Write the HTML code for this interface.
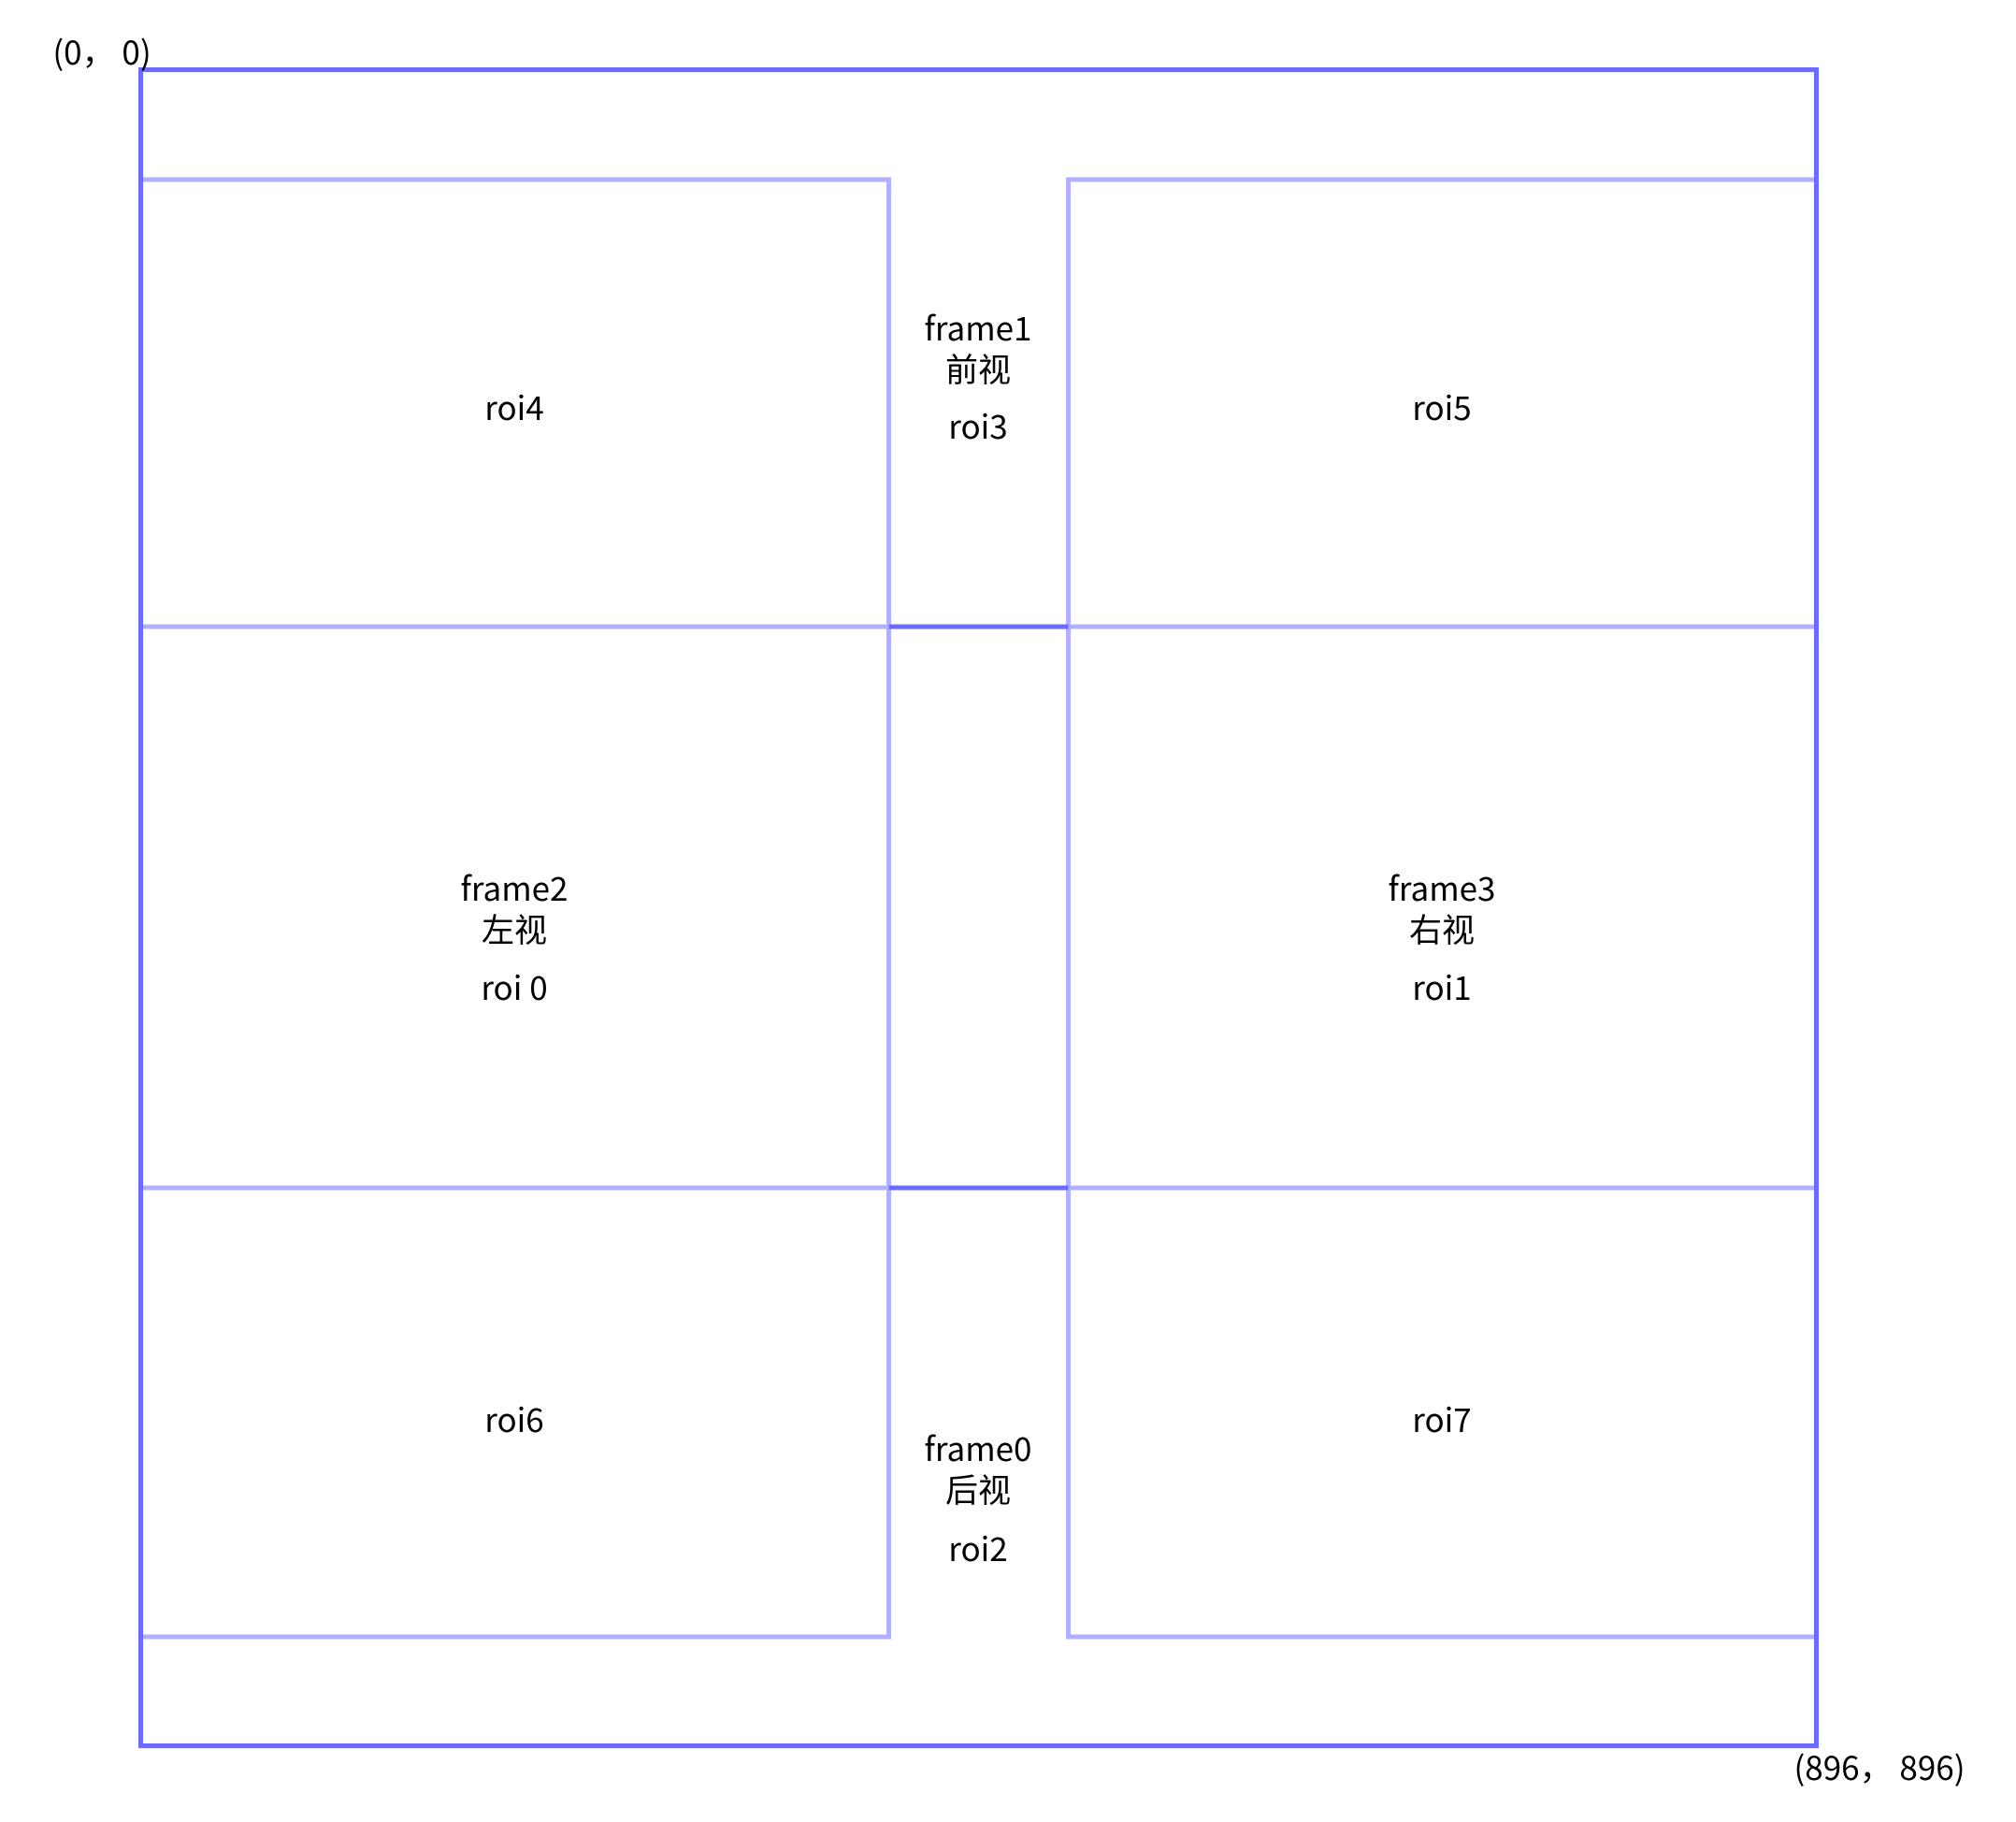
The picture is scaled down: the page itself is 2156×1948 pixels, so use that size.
<!DOCTYPE html>
<html><head><meta charset="utf-8">
<style>
html,body{margin:0;padding:0;background:#fff;}
body{width:2156px;height:1948px;position:relative;overflow:hidden;font-family:"Noto Sans CJK SC","Liberation Sans",sans-serif;color:#000;}
.t{position:absolute;transform:translate(-50%,-50%);font-size:35px;line-height:44px;white-space:nowrap;text-align:center;}
svg{position:absolute;left:0;top:0;}
</style></head><body>
<svg width="2156" height="1948" viewBox="0 0 2156 1948">
<g fill="none" stroke="#b0b0ff" stroke-width="5">
<path d="M150 192H950.5V1750H150"/>
<path d="M1942 192H1142.5V1750H1942"/>
<path d="M150 670H950.5M150 1270H950.5M1142.5 670H1942M1142.5 1270H1942"/>
</g>
<g fill="none" stroke="#6b6bff">
<path d="M950.5 670H1142.5M950.5 1270H1142.5" stroke-width="5"/>
<rect x="150.5" y="74.5" width="1792" height="1792" stroke-width="5"/>
</g>
</svg>
<div class="t" style="left:109px;top:55px;">(0，&nbsp;0)</div>
<div class="t" style="left:2010px;top:1889px;">(896，&nbsp;896)</div>
<div class="t" style="left:550px;top:435px;">roi4</div>
<div class="t" style="left:1542px;top:435px;">roi5</div>
<div class="t" style="left:1046px;top:350px;">frame1</div>
<div class="t" style="left:1046px;top:394px;">前视</div>
<div class="t" style="left:1046px;top:455px;">roi3</div>
<div class="t" style="left:550px;top:949px;">frame2</div>
<div class="t" style="left:550px;top:993px;">左视</div>
<div class="t" style="left:550px;top:1055px;">roi 0</div>
<div class="t" style="left:1542px;top:949px;">frame3</div>
<div class="t" style="left:1542px;top:993px;">右视</div>
<div class="t" style="left:1542px;top:1055px;">roi1</div>
<div class="t" style="left:550px;top:1517px;">roi6</div>
<div class="t" style="left:1542px;top:1517px;">roi7</div>
<div class="t" style="left:1046px;top:1548px;">frame0</div>
<div class="t" style="left:1046px;top:1592px;">后视</div>
<div class="t" style="left:1046px;top:1655px;">roi2</div>
</body></html>
